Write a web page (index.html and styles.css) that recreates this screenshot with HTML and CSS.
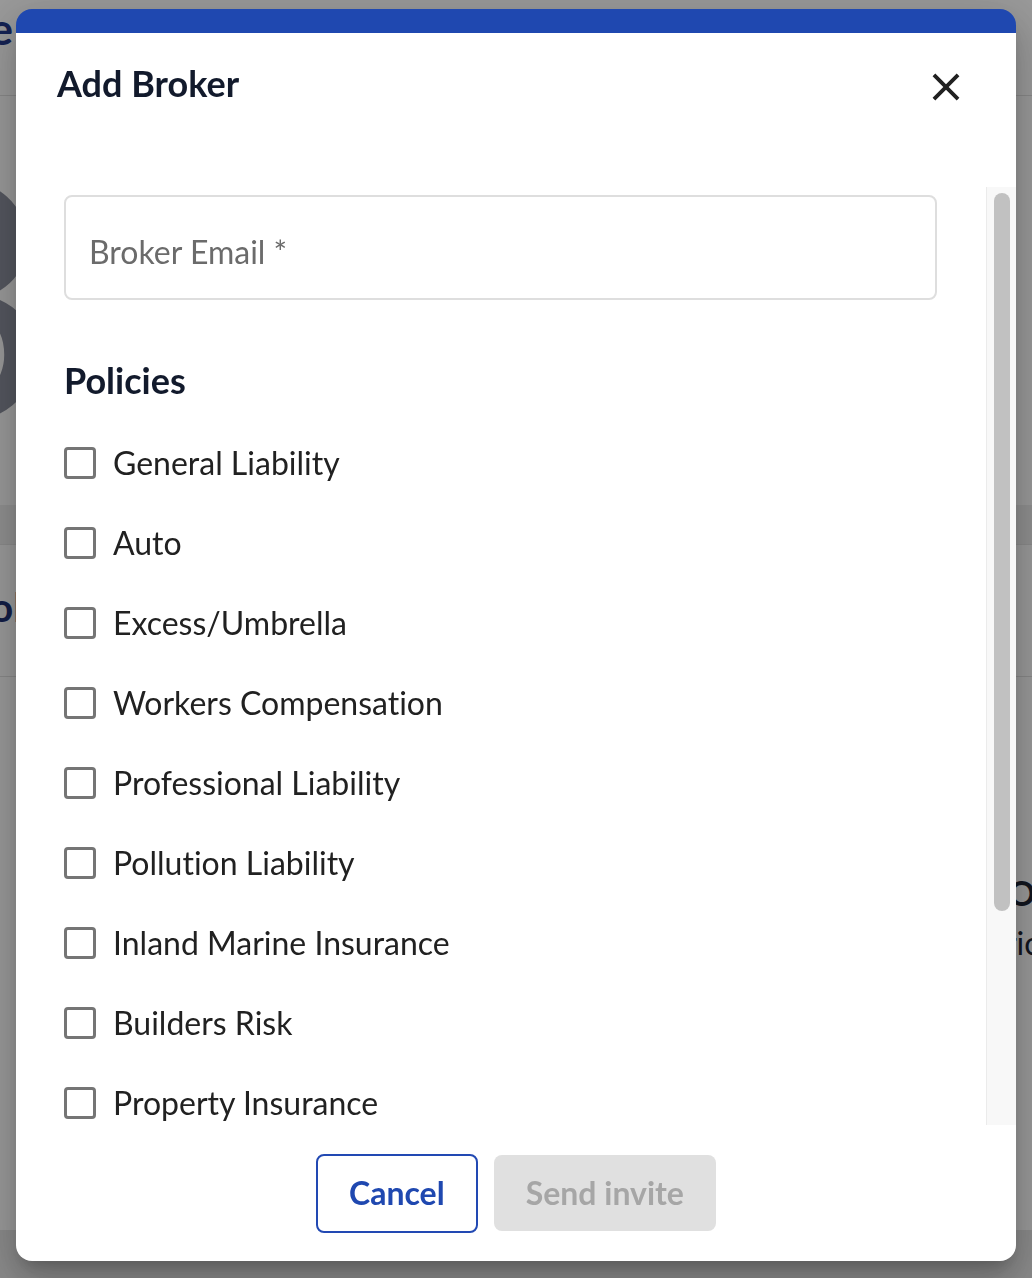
FILE: index.html
```html
<!DOCTYPE html>
<html lang="en">
<head>
<meta charset="utf-8">
<title>Add Broker</title>
<link rel="stylesheet" href="styles.css">
</head>
<body>
<div class="page" aria-hidden="true">
  <header class="bg-header">
    <div class="bg-brand"><span>Welcome</span></div>
  </header>
  <section class="bg-hero">
    <span class="bg-stat">8</span>
  </section>
  <div class="bg-band"></div>
  <section class="bg-section">
    <h2 class="bg-section-title">Tools</h2>
  </section>
  <section class="bg-main">
    <div class="bg-aside">
      <div class="bg-aside-title">Open</div>
      <div class="bg-aside-text">Pricing</div>
    </div>
  </section>
  <footer class="bg-footer"></footer>
</div>

<div class="backdrop"></div>

<div class="modal" role="dialog" aria-labelledby="modal-title">
  <div class="modal-head">
    <h2 class="modal-title" id="modal-title">Add Broker</h2>
    <button class="close" type="button" aria-label="Close">
      <svg viewBox="0 0 24 24" width="46" height="46" aria-hidden="true"><path d="M19 6.41 17.59 5 12 10.59 6.41 5 5 6.41 10.59 12 5 17.59 6.41 19 12 13.41 17.59 19 19 17.59 13.41 12z"/></svg>
    </button>
  </div>
  <div class="modal-body">
    <div class="scroll">
      <div class="field"><span class="placeholder">Broker Email *</span></div>
      <h3 class="section-title">Policies</h3>
      <ul class="policies">
        <li class="policy"><span class="box"></span><span class="label">General Liability</span></li>
        <li class="policy"><span class="box"></span><span class="label">Auto</span></li>
        <li class="policy"><span class="box"></span><span class="label">Excess/Umbrella</span></li>
        <li class="policy"><span class="box"></span><span class="label">Workers Compensation</span></li>
        <li class="policy"><span class="box"></span><span class="label">Professional Liability</span></li>
        <li class="policy"><span class="box"></span><span class="label">Pollution Liability</span></li>
        <li class="policy"><span class="box"></span><span class="label">Inland Marine Insurance</span></li>
        <li class="policy"><span class="box"></span><span class="label">Builders Risk</span></li>
        <li class="policy"><span class="box"></span><span class="label">Property Insurance</span></li>
        <li class="policy"><span class="box"></span><span class="label">Other</span></li>
      </ul>
    </div>
    <div class="scrollbar"><div class="thumb"></div></div>
  </div>
  <div class="modal-foot">
    <button class="btn btn-outline" type="button">Cancel</button>
    <button class="btn btn-disabled" type="button" disabled>Send invite</button>
  </div>
</div>
</body>
</html>
```

FILE: styles.css
```css
* { box-sizing: border-box; }

html, body {
  margin: 0;
  height: 1278px;
  overflow: hidden;
}

body {
  font-family: Lato, "Open Sans", "Liberation Sans", sans-serif;
  font-variant-ligatures: no-common-ligatures;
  background: #ffffff;
  color: #212121;
}

/* ---------- background page ---------- */
.page {
  height: 1278px;
  display: flex;
  flex-direction: column;
  overflow: hidden;
}

.bg-header {
  height: 96px;
  flex: none;
  border-bottom: 1px solid #e2e2e2;
  padding-top: 2px;
}

.bg-brand {
  width: 13px;
  display: flex;
  justify-content: flex-end;
  white-space: nowrap;
  font-size: 44px;
  font-weight: 700;
  line-height: 1.2;
  color: #22388a;
}

.bg-hero {
  height: 409px;
  flex: none;
  padding-top: 28px;
  overflow: hidden;
}

.bg-stat {
  display: block;
  margin-left: -143px;
  font-size: 335px;
  line-height: 1;
  color: #8c909e;
}

.bg-band {
  height: 40px;
  flex: none;
  background: #efefef;
  border-bottom: 1px solid #e6e6e6;
}

.bg-section {
  height: 132px;
  flex: none;
  border-bottom: 1px solid #e2e2e2;
  padding-top: 38px;
}

.bg-section-title {
  margin: 0 0 0 -52px;
  font-size: 40px;
  font-weight: 700;
  line-height: 1.2;
  color: #1f3275;
}

.bg-main {
  flex: 1;
  padding-top: 192px;
}

.bg-aside {
  margin-left: 986px;
  white-space: nowrap;
  color: #1d2433;
}

.bg-aside-title {
  margin-left: 22px;
  font-size: 34px;
  font-weight: 700;
  line-height: 1.4;
}

.bg-aside-text {
  margin-top: 4px;
  font-size: 32px;
  line-height: 1.4;
}

.bg-footer {
  height: 48px;
  flex: none;
  background: #e6e6e6;
}

.backdrop {
  position: fixed;
  inset: 0;
  background: rgba(0, 0, 0, 0.4);
}

/* ---------- modal ---------- */
.modal {
  position: fixed;
  left: 16px;
  top: 9px;
  width: 1000px;
  height: 1252px;
  display: flex;
  flex-direction: column;
  background: #ffffff;
  border-top: 24px solid #1f48b0;
  border-radius: 16px;
  overflow: hidden;
  box-shadow: 0 11px 15px -7px rgba(0, 0, 0, 0.2),
              0 24px 38px 3px rgba(0, 0, 0, 0.14),
              0 9px 46px 8px rgba(0, 0, 0, 0.12);
}

.modal-head {
  height: 154px;
  flex: none;
  display: flex;
  justify-content: space-between;
  align-items: flex-start;
  padding: 29px 47px 0 41px;
}

.modal-title {
  margin: 0;
  font-size: 36px;
  font-weight: 700;
  line-height: 1.2;
  color: #121a2c;
}

.close {
  margin-top: 2px;
  width: 46px;
  height: 46px;
  padding: 0;
  border: 0;
  background: none;
  display: flex;
  cursor: pointer;
}

.close svg { fill: #212121; }

.modal-body {
  flex: 1;
  min-height: 0;
  display: flex;
}

.scroll {
  flex: 1;
  min-width: 0;
  overflow: hidden;
  padding: 8px 49px 0 48px;
}

.field {
  height: 105px;
  border: 2px solid #dedede;
  border-radius: 8px;
  display: flex;
  align-items: center;
  padding: 10px 0 0 23px;
}

.placeholder {
  font-size: 32px;
  line-height: 1.2;
  color: #6b6b6b;
}

.section-title {
  margin: 59px 0 0 0;
  font-size: 36px;
  font-weight: 700;
  line-height: 1.2;
  color: #121a2c;
}

.policies {
  list-style: none;
  margin: 21px 0 0;
  padding: 0;
}

.policy {
  height: 80px;
  display: flex;
  align-items: center;
  gap: 17px;
}

.box {
  width: 32px;
  height: 32px;
  flex: none;
  border: 3px solid #757575;
  border-radius: 4px;
}

.label {
  font-size: 32px;
  line-height: 1.2;
  color: #212121;
}

.scrollbar {
  width: 30px;
  flex: none;
  background: #f8f8f8;
  border-left: 1px solid #ebebeb;
  padding: 6px 0 0 7px;
}

.thumb {
  width: 16px;
  height: 718px;
  border-radius: 8px;
  background: #c1c1c1;
}

.modal-foot {
  height: 136px;
  flex: none;
  display: flex;
  justify-content: center;
  align-items: center;
  gap: 16px;
}

.btn {
  font-family: inherit;
  font-size: 32px;
  font-weight: 700;
  line-height: 1.2;
  border-radius: 8px;
  cursor: pointer;
}

.btn-outline {
  height: 79px;
  padding: 0 31px;
  border: 2px solid #2249b3;
  background: #ffffff;
  color: #1f48b0;
}

.btn-disabled {
  height: 76px;
  padding: 0 32px;
  border: 0;
  background: #e0e0e0;
  color: #a6a6a6;
  cursor: default;
}
```
